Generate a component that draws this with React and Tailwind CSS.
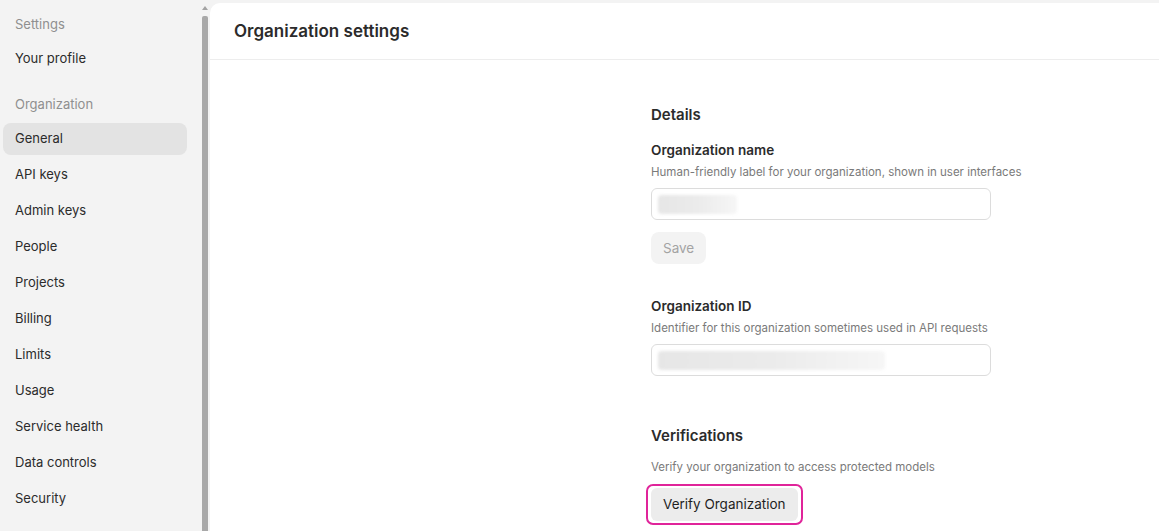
import { useState } from "react";

const navGroups = [
  { title: "Settings", items: ["Your profile"] },
  {
    title: "Organization",
    items: [
      "General",
      "API keys",
      "Admin keys",
      "People",
      "Projects",
      "Billing",
      "Limits",
      "Usage",
      "Service health",
      "Data controls",
      "Security",
    ],
  },
];

function Sidebar({ active, onSelect }) {
  return (
    <aside className="w-[200px] shrink-0 bg-[#f3f3f3] pt-[14px] pl-[3px] pr-[13px]">
      {navGroups.map((group, gi) => (
        <div key={group.title} className={gi > 0 ? "mt-[19px]" : ""}>
          <p className="px-3 h-5 leading-5 text-[13px] text-[#8f8f8f]">{group.title}</p>
          <ul className="mt-[9px] flex flex-col gap-1">
            {group.items.map((item) => (
              <li key={item}>
                <button
                  onClick={() => onSelect(item)}
                  className={`w-full h-8 px-3 text-left rounded-lg text-[13px] text-[#2b2b2b] ${
                    active === item ? "bg-[#e3e3e3]" : ""
                  }`}
                >
                  {item}
                </button>
              </li>
            ))}
          </ul>
        </div>
      ))}
    </aside>
  );
}

function Scrollbar() {
  return (
    <div className="w-[10px] shrink-0 bg-[#f3f3f3] flex flex-col items-center pt-[6px]">
      <div className="w-0 h-0 border-l-[3px] border-r-[3px] border-b-[4px] border-l-transparent border-r-transparent border-b-[#a3a3a3]" />
      <div className="mt-[6px] w-[6px] flex-1 bg-[#a8a8a8] rounded-t-[2px]" />
    </div>
  );
}

function Redacted({ width }) {
  return (
    <div
      className="h-[19px] rounded bg-gradient-to-r from-[#e6e6e6] via-[#ebebeb] to-[#f6f6f6] blur-[1.5px]"
      style={{ width }}
    />
  );
}

function Field({ label, hint, redactedWidth, children }) {
  return (
    <div>
      <h3 className="text-[13.5px] font-semibold text-[#2b2b2b] leading-5">{label}</h3>
      <p className="mt-[4px] text-[11.5px] text-[#7a7a7a] leading-4 whitespace-nowrap">{hint}</p>
      <div className="mt-[8px] w-[340px] h-8 rounded-md border border-[#dcdcdc] bg-white flex items-center px-[6px]">
        <Redacted width={redactedWidth} />
      </div>
      {children}
    </div>
  );
}

export default function App() {
  const [active, setActive] = useState("General");

  return (
    <div
      className="h-[531px] w-full flex bg-[#f3f3f3] overflow-hidden"
      style={{ fontFamily: "Inter, 'Noto Sans', sans-serif" }}
    >
      <Sidebar active={active} onSelect={setActive} />
      <Scrollbar />
      <main className="flex-1 min-h-0 mt-[3px] bg-white rounded-tl-[10px] flex flex-col overflow-hidden">
        <header className="h-[57px] shrink-0 flex items-center px-6 pt-[2px] border-b border-[#ededed]">
          <h1 className="text-[17px] font-semibold text-[#2b2b2b]">Organization settings</h1>
        </header>

        <div className="pt-[45px] pl-[441px]">
          <div className="w-[380px]">
            <h2 className="text-[15px] font-semibold text-[#2b2b2b] leading-5">Details</h2>

            <div className="mt-[15px]">
              <Field
                label="Organization name"
                hint="Human-friendly label for your organization, shown in user interfaces"
                redactedWidth={79}
              >
                <button className="mt-3 h-8 px-[12px] rounded-lg bg-[#f3f3f3] text-[13.5px] text-[#a3a3a3]">
                  Save
                </button>
              </Field>
            </div>

            <div className="mt-[32px]">
              <Field
                label="Organization ID"
                hint="Identifier for this organization sometimes used in API requests"
                redactedWidth={227}
              />
            </div>

            <h2 className="mt-[50px] text-[15px] font-semibold text-[#2b2b2b] leading-5">
              Verifications
            </h2>
            <p className="mt-[13px] text-[11.5px] text-[#7a7a7a] leading-4">
              Verify your organization to access protected models
            </p>
            <div className="mt-[9px] -ml-[5px] inline-flex px-[3px] py-[2px] rounded-[7px] border-2 border-[#e0249a]">
              <button className="h-[33px] px-[12px] rounded-md bg-[#ececec] text-[13.5px] text-[#1f1f1f]">
                Verify Organization
              </button>
            </div>
          </div>
        </div>
      </main>
    </div>
  );
}
